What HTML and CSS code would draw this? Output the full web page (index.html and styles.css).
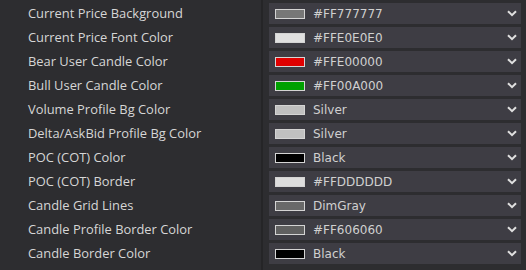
FILE: index.html
```html
<!DOCTYPE html>
<html>
<head>
<meta charset="utf-8">
<link rel="stylesheet" href="styles.css">
</head>
<body>
<div class="grid">
  <div class="labels">
    <div class="label">Current Price Background</div>
    <div class="label">Current Price Font Color</div>
    <div class="label">Bear User Candle Color</div>
    <div class="label">Bull User Candle Color</div>
    <div class="label">Volume Profile Bg Color</div>
    <div class="label">Delta/AskBid Profile Bg Color</div>
    <div class="label">POC (COT) Color</div>
    <div class="label">POC (COT) Border</div>
    <div class="label">Candle Grid Lines</div>
    <div class="label">Candle Profile Border Color</div>
    <div class="label">Candle Border Color</div>
  </div>
  <div class="sep"></div>
  <div class="values">
    <div class="row"><div class="box"><span class="sw" style="background:#777777"></span><span class="val">#FF777777</span><svg class="chev" viewBox="0 0 10 7"><path d="M1 1.2 L5 5.2 L9 1.2"/></svg></div></div>
    <div class="row"><div class="box"><span class="sw" style="background:#e0e0e0"></span><span class="val">#FFE0E0E0</span><svg class="chev" viewBox="0 0 10 7"><path d="M1 1.2 L5 5.2 L9 1.2"/></svg></div></div>
    <div class="row"><div class="box"><span class="sw" style="background:#e00000"></span><span class="val">#FFE00000</span><svg class="chev" viewBox="0 0 10 7"><path d="M1 1.2 L5 5.2 L9 1.2"/></svg></div></div>
    <div class="row"><div class="box"><span class="sw" style="background:#00a000"></span><span class="val">#FF00A000</span><svg class="chev" viewBox="0 0 10 7"><path d="M1 1.2 L5 5.2 L9 1.2"/></svg></div></div>
    <div class="row"><div class="box"><span class="sw" style="background:#c0c0c0"></span><span class="val">Silver</span><svg class="chev" viewBox="0 0 10 7"><path d="M1 1.2 L5 5.2 L9 1.2"/></svg></div></div>
    <div class="row"><div class="box"><span class="sw" style="background:#c0c0c0"></span><span class="val">Silver</span><svg class="chev" viewBox="0 0 10 7"><path d="M1 1.2 L5 5.2 L9 1.2"/></svg></div></div>
    <div class="row"><div class="box"><span class="sw" style="background:#000000"></span><span class="val">Black</span><svg class="chev" viewBox="0 0 10 7"><path d="M1 1.2 L5 5.2 L9 1.2"/></svg></div></div>
    <div class="row"><div class="box"><span class="sw" style="background:#dddddd"></span><span class="val">#FFDDDDDD</span><svg class="chev" viewBox="0 0 10 7"><path d="M1 1.2 L5 5.2 L9 1.2"/></svg></div></div>
    <div class="row"><div class="box"><span class="sw" style="background:#696969"></span><span class="val">DimGray</span><svg class="chev" viewBox="0 0 10 7"><path d="M1 1.2 L5 5.2 L9 1.2"/></svg></div></div>
    <div class="row"><div class="box"><span class="sw" style="background:#606060"></span><span class="val">#FF606060</span><svg class="chev" viewBox="0 0 10 7"><path d="M1 1.2 L5 5.2 L9 1.2"/></svg></div></div>
    <div class="row"><div class="box"><span class="sw" style="background:#000000"></span><span class="val">Black</span><svg class="chev" viewBox="0 0 10 7"><path d="M1 1.2 L5 5.2 L9 1.2"/></svg></div></div>
  </div>
</div>
</body>
</html>
```
FILE: styles.css
```css
html, body {
  margin: 0;
  padding: 0;
  background: #2d2d30;
  width: 526px;
  height: 270px;
  overflow: hidden;
}
.grid {
  display: grid;
  grid-template-columns: 261px 2px 1fr;
  height: 270px;
}
.labels {
  display: flex;
  flex-direction: column;
  padding-top: 1px;
}
.label {
  height: 24px;
  line-height: 24px;
  padding-left: 28px;
  font-family: "Open Sans", sans-serif;
  font-size: 12.9px;
  color: #d6d6d6;
  white-space: nowrap;
}
.sep {
  background: #252527;
}
.values {
  display: flex;
  flex-direction: column;
  padding-top: 3px;
  padding-left: 6px;
  padding-right: 5px;
}
.row {
  height: 24px;
}
.box {
  height: 21px;
  background: #3e3d44;
  display: flex;
  align-items: center;
  padding-left: 6px;
  padding-right: 4px;
}
.sw {
  width: 28px;
  height: 8px;
  border: 1px solid #d4d4d4;
  flex: none;
}
.val {
  margin-left: 8px;
  font-family: "DejaVu Sans", sans-serif;
  font-size: 12px;
  color: #d0d0d0;
  flex: 1;
}
.chev {
  width: 10px;
  height: 7px;
  fill: none;
  stroke: #e0e0e0;
  stroke-width: 2;
}
```
